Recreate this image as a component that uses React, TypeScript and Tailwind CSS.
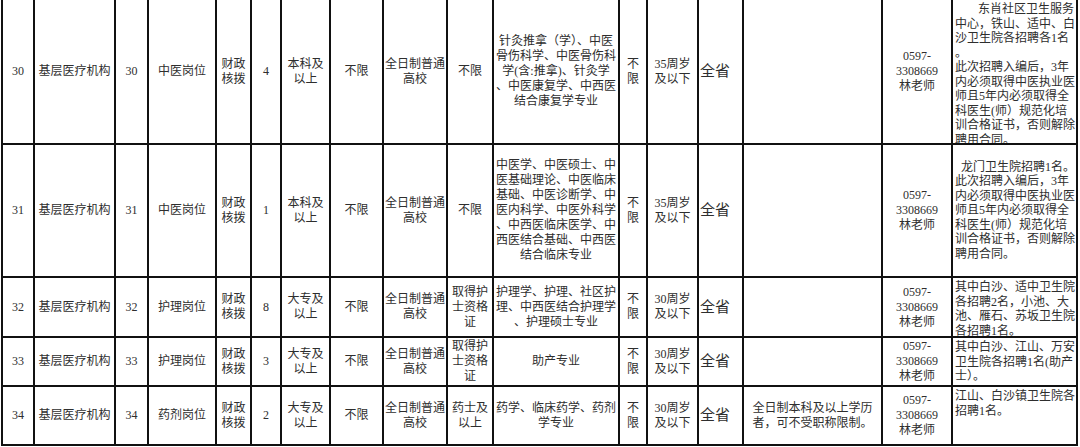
import React from 'react';

type Row = {
  h: number;
  no: string;
  post: string;
  fund: string[];
  num: string;
  edu: string[];
  type: string[];
  cert: string[];
  major: string[];
  age: string[];
  other: string[];
  notes: string[];
  indent: number;
  notesTop?: boolean;
  clip?: number;
};

const widths = [32, 81, 33, 68, 35, 30, 49, 53, 64, 46, 126, 28, 51, 45, 139, 70, 125];

const rows: Row[] = [
  {
    h: 145,
    no: '30',
    post: '中医岗位',
    fund: ['财政', '核拨'],
    num: '4',
    edu: ['本科及', '以上'],
    type: ['全日制普通', '高校'],
    cert: ['不限'],
    major: ['针灸推拿（学）、中医', '骨伤科学、中医骨伤科', '学(含:推拿)、针灸学', '、中医康复学、中西医', '结合康复学专业'],
    age: ['35周岁', '及以下'],
    other: [],
    notes: ['东肖社区卫生服务', '中心，铁山、适中、白', '沙卫生院各招聘各1名', '。', '此次招聘入编后，3年', '内必须取得中医执业医', '师且5年内必须取得全', '科医生(师）规范化培', '训合格证书，否则解除', '聘用合同。'],
    indent: 23,
    notesTop: true,
    clip: 143,
  },
  {
    h: 133,
    no: '31',
    post: '中医岗位',
    fund: ['财政', '核拨'],
    num: '1',
    edu: ['本科及', '以上'],
    type: ['全日制普通', '高校'],
    cert: ['不限'],
    major: ['中医学、中医硕士、中', '医基础理论、中医临床', '基础、中医诊断学、中', '医内科学、中医外科学', '、中西医临床医学、中', '西医结合基础、中西医', '结合临床专业'],
    age: ['35周岁', '及以下'],
    other: [],
    notes: ['龙门卫生院招聘1名。', '此次招聘入编后，3年', '内必须取得中医执业医', '师且5年内必须取得全', '科医生(师）规范化培', '训合格证书，否则解除', '聘用合同。'],
    indent: 6,
  },
  {
    h: 60,
    no: '32',
    post: '护理岗位',
    fund: ['财政', '核拨'],
    num: '8',
    edu: ['大专及', '以上'],
    type: ['全日制普通', '高校'],
    cert: ['取得护', '士资格', '证'],
    major: ['护理学、护理、社区护', '理、中西医结合护理学', '、护理硕士专业'],
    age: ['30周岁', '及以下'],
    other: [],
    notes: ['其中白沙、适中卫生院', '各招聘2名，小池、大', '池、雁石、苏坂卫生院', '各招聘1名。'],
    indent: 0,
    notesTop: true,
    clip: 58,
  },
  {
    h: 49,
    no: '33',
    post: '护理岗位',
    fund: ['财政', '核拨'],
    num: '3',
    edu: ['大专及', '以上'],
    type: ['全日制普通', '高校'],
    cert: ['取得护', '士资格', '证'],
    major: ['助产专业'],
    age: ['30周岁', '及以下'],
    other: [],
    notes: ['其中白沙、江山、万安', '卫生院各招聘1名(助产', '士）。'],
    indent: 0,
    notesTop: true,
    clip: 47,
  },
  {
    h: 59,
    no: '34',
    post: '药剂岗位',
    fund: ['财政', '核拨'],
    num: '2',
    edu: ['大专及', '以上'],
    type: ['全日制普通', '高校'],
    cert: ['药士及', '以上'],
    major: ['药学、临床药学、药剂', '学专业'],
    age: ['30周岁', '及以下'],
    other: ['全日制本科及以上学历', '者，可不受职称限制。'],
    notes: ['江山、白沙镇卫生院各', '招聘1名。'],
    indent: 0,
    notesTop: true,
  },
];

const Lines = ({ lines }: { lines: string[] }) => (
  <>
    {lines.map((l, i) => (
      <div key={i} className="whitespace-nowrap">
        {l}
      </div>
    ))}
  </>
);

const cell = 'border-r-2 border-b-2 border-[#111] p-0 text-center align-middle leading-[15px]';

export default function App() {
  return (
    <div
      className="w-[1080px] h-[447px] overflow-hidden bg-white text-[12px] text-[#2e2e2e]"
      style={{ fontFamily: '"Liberation Serif", "Noto Sans CJK SC", serif' }}
    >
      <table className="ml-px w-[1077px] table-fixed border-separate border-spacing-0 border-l-2 border-[#111]">
        <colgroup>
          {widths.map((w, i) => (
            <col key={i} style={{ width: w }} />
          ))}
        </colgroup>
        <tbody>
          {rows.map((r) => (
            <tr key={r.no} style={{ height: r.h }}>
              <td className={cell}>{r.no}</td>
              <td className={cell}>基层医疗机构</td>
              <td className={cell}>{r.no}</td>
              <td className={cell}>{r.post}</td>
              <td className={cell}>
                <Lines lines={r.fund} />
              </td>
              <td className={cell}>{r.num}</td>
              <td className={cell}>
                <Lines lines={r.edu} />
              </td>
              <td className={cell}>不限</td>
              <td className={cell}>
                <Lines lines={r.type} />
              </td>
              <td className={cell}>
                <Lines lines={r.cert} />
              </td>
              <td className={cell}>
                <Lines lines={r.major} />
              </td>
              <td className={cell}>
                <Lines lines={['不', '限']} />
              </td>
              <td className={cell}>
                <Lines lines={r.age} />
              </td>
              <td className={`${cell} !text-left pl-px text-[15px]`}>全省</td>
              <td className={cell}>
                <Lines lines={r.other} />
              </td>
              <td className={cell}>
                <Lines lines={['0597-', '3308669', '林老师']} />
              </td>
              <td className={`${cell} !text-left ${r.notesTop ? '!align-top' : ''}`}>
                <div
                  className={`pl-[2px] leading-[14.5px] overflow-hidden ${r.notesTop ? 'pt-[2px]' : ''}`}
                  style={r.clip ? { height: r.clip } : undefined}
                >
                  {r.notes.map((l, i) => (
                    <div key={i} className="whitespace-nowrap" style={i === 0 ? { paddingLeft: r.indent } : undefined}>
                      {l}
                    </div>
                  ))}
                </div>
              </td>
            </tr>
          ))}
        </tbody>
      </table>
    </div>
  );
}
